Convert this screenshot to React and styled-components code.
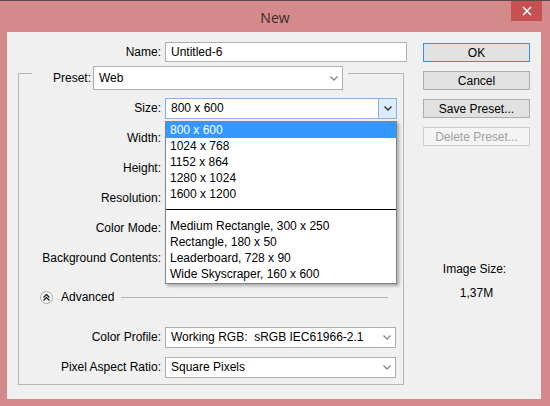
import React from 'react';
import styled, { createGlobalStyle } from 'styled-components';

const GlobalStyle = createGlobalStyle`
  html, body {
    margin: 0;
    padding: 0;
    background: #d4898a;
  }
  body {
    font-family: "Liberation Sans", Arial, sans-serif;
    font-size: 12px;
    color: #000;
  }
`;

const sizes = ['800 x 600', '1024 x 768', '1152 x 864', '1280 x 1024', '1600 x 1200'];
const banners = [
  'Medium Rectangle, 300 x 250',
  'Rectangle, 180 x 50',
  'Leaderboard, 728 x 90',
  'Wide Skyscraper, 160 x 600',
];
const hiddenRows = ['Width:', 'Height:', 'Resolution:', 'Color Mode:', 'Background Contents:'];

const Chevron = ({ dark }) => (
  <svg width="8" height="5" viewBox="0 0 8 5">
    <polyline
      points="0.5,0.5 4,4 7.5,0.5"
      fill="none"
      stroke={dark ? '#303030' : '#8a8a8a'}
      strokeWidth="1.4"
    />
  </svg>
);

const App = () => {
  return (
    <>
      <GlobalStyle />
      <Window>
        <TitleBar>
          <span />
          <Title>New</Title>
          <CloseButton>
            <svg width="10" height="10" viewBox="0 0 10 10">
              <path d="M1 1L9 9M9 1L1 9" stroke="#fff" strokeWidth="1.6" />
            </svg>
          </CloseButton>
        </TitleBar>
        <Client>
          <LeftPanel>
            <NameRow>
              <Label>Name:</Label>
              <TextField>Untitled-6</TextField>
            </NameRow>
            <GroupBox>
              <GroupHeader>
                <Label>Preset:</Label>
                <Select $width={250} $height={24}>
                  <span>Web</span>
                  <ArrowCell>
                    <Chevron />
                  </ArrowCell>
                </Select>
              </GroupHeader>
              <Rows>
                <FieldRow>
                  <Label>Size:</Label>
                  <DropWrap>
                    <Select $width={232} $focused>
                      <span>800 x 600</span>
                      <ArrowCell $active>
                        <Chevron dark />
                      </ArrowCell>
                    </Select>
                    <DropList>
                      {sizes.map((s, i) => (
                        <DropItem key={s} $selected={i === 0}>{s}</DropItem>
                      ))}
                      <Separator />
                      {banners.map((s) => (
                        <DropItem key={s}>{s}</DropItem>
                      ))}
                    </DropList>
                  </DropWrap>
                </FieldRow>
                {hiddenRows.map((l) => (
                  <FieldRow key={l}>
                    <Label>{l}</Label>
                    <span />
                  </FieldRow>
                ))}
              </Rows>
              <AdvancedRow>
                <RoundButton>
                  <svg width="9" height="9" viewBox="0 0 9 9">
                    <polyline points="1.5,4.5 4.5,1.5 7.5,4.5" fill="none" stroke="#222" strokeWidth="1.3" />
                    <polyline points="1.5,7.5 4.5,4.5 7.5,7.5" fill="none" stroke="#222" strokeWidth="1.3" />
                  </svg>
                </RoundButton>
                <span>Advanced</span>
                <Rule />
              </AdvancedRow>
              <AdvancedRows>
                <FieldRow>
                  <Label>Color Profile:</Label>
                  <Select $width={231}>
                    <span>Working RGB:&nbsp; sRGB IEC61966-2.1</span>
                    <ArrowCell>
                      <Chevron />
                    </ArrowCell>
                  </Select>
                </FieldRow>
                <FieldRow>
                  <Label>Pixel Aspect Ratio:</Label>
                  <Select $width={231}>
                    <span>Square Pixels</span>
                    <ArrowCell>
                      <Chevron />
                    </ArrowCell>
                  </Select>
                </FieldRow>
              </AdvancedRows>
            </GroupBox>
          </LeftPanel>
          <RightPanel>
            <Button $default>OK</Button>
            <Button>Cancel</Button>
            <Button>Save Preset...</Button>
            <Button disabled>Delete Preset...</Button>
            <Info>
              <span>Image Size:</span>
              <span>1,37M</span>
            </Info>
          </RightPanel>
        </Client>
      </Window>
    </>
  );
};

const Window = styled.div`
  width: 550px;
  height: 406px;
  box-sizing: border-box;
  background: #d4898a;
  border-top: 1px solid #5e4a4b;
  display: flex;
  flex-direction: column;
`;

const TitleBar = styled.div`
  height: 31px;
  display: grid;
  grid-template-columns: 1fr auto 1fr;
  align-items: start;
  padding-right: 8px;
`;

const Title = styled.span`
  font-family: "Open Sans", "Liberation Sans", sans-serif;
  font-size: 14px;
  color: #3a2b2b;
  line-height: 33px;
  margin-left: 8px;
`;

const CloseButton = styled.div`
  justify-self: end;
  width: 31px;
  height: 20px;
  background: #c75050;
  display: flex;
  align-items: center;
  justify-content: center;
`;

const Client = styled.div`
  flex: 1;
  margin: 0 9px 7px 7px;
  background: #f0f0f0;
  display: grid;
  grid-template-columns: 416px 107px;
  align-items: start;
`;

const LeftPanel = styled.div`
  padding-top: 10px;
  display: flex;
  flex-direction: column;
`;

const Label = styled.span`
  text-align: right;
  white-space: nowrap;
`;

const NameRow = styled.div`
  display: grid;
  grid-template-columns: 154px 242px;
  column-gap: 4px;
  align-items: center;
  height: 20px;
`;

const TextField = styled.div`
  height: 20px;
  box-sizing: border-box;
  border: 1px solid #abadb3;
  background: #fff;
  padding: 0 5px;
  line-height: 18px;
`;

const GroupBox = styled.div`
  margin: 11px 0 0 11px;
  width: 386px;
  height: 312px;
  box-sizing: border-box;
  border: 1px solid #b5b5b5;
  display: flex;
  flex-direction: column;
`;

const GroupHeader = styled.div`
  margin: -8px 0 0 13px;
  width: 316px;
  box-sizing: border-box;
  padding: 0 5px;
  background: #f0f0f0;
  display: flex;
  align-items: center;
  justify-content: space-between;
  padding-left: 21px;
`;

const Select = styled.div`
  width: ${(p) => p.$width}px;
  height: ${(p) => p.$height || 21}px;
  box-sizing: border-box;
  border: 1px solid ${(p) => (p.$focused ? '#7eb4ea' : '#abadb3')};
  background: #fff;
  display: flex;
  align-items: stretch;
  justify-content: space-between;
  & > span {
    padding-left: 5px;
    display: flex;
    align-items: center;
    white-space: nowrap;
  }
`;

const ArrowCell = styled.div`
  width: 17px;
  display: flex;
  align-items: center;
  justify-content: center;
  background: ${(p) => (p.$active ? '#dcecfc' : 'transparent')};
  border-left: 1px solid ${(p) => (p.$active ? '#7eb4ea' : 'transparent')};
`;

const Rows = styled.div`
  margin-top: 3px;
  display: flex;
  flex-direction: column;
`;

const FieldRow = styled.div`
  display: grid;
  grid-template-columns: 142px auto;
  column-gap: 4px;
  align-items: center;
  height: 30px;
`;

const DropWrap = styled.div`
  position: relative;
`;

const DropList = styled.div`
  position: absolute;
  top: 23px;
  left: 0;
  width: 232px;
  box-sizing: border-box;
  border: 1px solid #7a8590;
  background: #fff;
  padding-bottom: 1px;
  box-shadow: 2px 2px 3px rgba(0, 0, 0, 0.3);
  z-index: 2;
`;

const DropItem = styled.div`
  height: 16px;
  line-height: 16px;
  padding-left: 4px;
  white-space: nowrap;
  background: ${(p) => (p.$selected ? '#3399ff' : 'transparent')};
  color: ${(p) => (p.$selected ? '#fff' : '#000')};
`;

const Separator = styled.div`
  height: 16px;
  display: flex;
  align-items: center;
  &::after {
    content: '';
    flex: 1;
    height: 1px;
    background: #000;
  }
`;

const AdvancedRow = styled.div`
  margin-top: 9px;
  height: 30px;
  display: flex;
  align-items: center;
  padding: 0 15px 0 21px;
  gap: 8px;
`;

const RoundButton = styled.div`
  width: 13px;
  height: 13px;
  box-sizing: border-box;
  border: 1px solid #a8a8a8;
  border-radius: 50%;
  background: #fafafa;
  display: flex;
  align-items: center;
  justify-content: center;
`;

const Rule = styled.div`
  flex: 1;
  height: 1px;
  background: #b5b5b5;
  margin-left: -1px;
`;

const AdvancedRows = styled.div`
  margin-top: 10px;
  display: flex;
  flex-direction: column;
`;

const RightPanel = styled.div`
  padding-top: 11px;
  display: flex;
  flex-direction: column;
  gap: 9px;
`;

const Button = styled.div`
  height: 19px;
  box-sizing: border-box;
  border: 1px solid ${(p) => (p.disabled ? '#cccccc' : p.$default ? '#3c8fe0' : '#adadad')};
  background: ${(p) => (p.disabled ? '#f4f4f4' : '#e1e1e1')};
  color: ${(p) => (p.disabled ? '#a0a0a0' : '#000')};
  display: flex;
  align-items: center;
  justify-content: center;
`;

const Info = styled.div`
  margin-top: 107px;
  display: flex;
  flex-direction: column;
  align-items: center;
  gap: 10px;
  & > span:first-child {
    margin-right: 4px;
  }
`;

export default App;
